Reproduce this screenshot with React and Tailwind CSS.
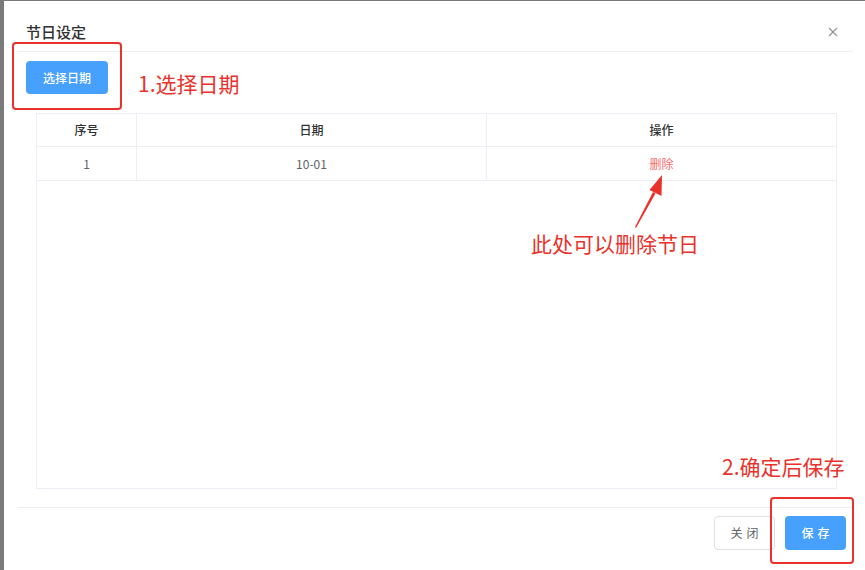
import React from "react";

const rows = [{ id: 1, date: "10-01" }];

const Arrow = () => (
  <svg className="absolute left-[626px] top-[170px]" width="44" height="62" viewBox="0 0 44 62">
    {/* tapered shaft + head pointing up-right */}
    <polygon points="9,57 27,22 29.5,23.5 10,58" fill="#e8322b" />
    <polygon points="36,5 35.5,26 23.5,20" fill="#e8322b" />
  </svg>
);

const App = () => {
  return (
    <div
      className="relative w-[865px] h-[570px] bg-[#7a7a7a] pl-[4px] pt-[1px] overflow-hidden"
      style={{ fontFamily: '"Noto Sans CJK SC", "Liberation Sans", sans-serif' }}
    >
      <div className="h-full bg-white flex flex-col">
        <div className="ml-[14px] mr-[12px] flex flex-col h-full">
          {/* header */}
          <div className="h-[51px] pt-[12px] flex items-center justify-between border-b border-[#ebeef5] shrink-0">
            <div className="pl-[8px] text-[15px] font-medium text-[#303133]">节日设定</div>
            <div className="pr-[15px]">
              <svg width="10" height="10" viewBox="0 0 10 10">
                <path d="M1 1L9 9M9 1L1 9" stroke="#909399" strokeWidth="1.2" />
              </svg>
            </div>
          </div>

          {/* toolbar */}
          <div className="pt-[9px] pl-[8px] h-[42px] flex items-start gap-[30px]">
            <button className="w-[82px] h-[33px] rounded-[4px] bg-[#46a0fc] text-white text-[12px] font-medium">
              选择日期
            </button>
            <span className="mt-[7px] text-[21px] leading-[30px] text-[#e8322b]">1.选择日期</span>
          </div>

          {/* table */}
          <div className="ml-[18px] mt-[19px] w-[801px] h-[376px] border border-[#ebeef5] text-[12px]">
            <div className="grid grid-cols-[100px_350px_1fr] h-[33px] border-b border-[#ebeef5] text-[#303133] font-medium">
              <div className="flex items-center justify-center border-r border-[#ebeef5]">序号</div>
              <div className="flex items-center justify-center border-r border-[#ebeef5]">日期</div>
              <div className="flex items-center justify-center">操作</div>
            </div>
            {rows.map((r) => (
              <div key={r.id} className="grid grid-cols-[100px_350px_1fr] h-[34px] border-b border-[#ebeef5] text-[#606266]">
                <div className="flex items-center justify-center border-r border-[#ebeef5]">{r.id}</div>
                <div className="flex items-center justify-center border-r border-[#ebeef5]">{r.date}</div>
                <div className="flex items-center justify-center text-[#f56c6c]">删除</div>
              </div>
            ))}
          </div>

          {/* footer */}
          <div className="mt-[18px] border-t border-[#ebeef5] flex-1 flex items-start justify-end gap-[10px] pt-[8px] pr-[7px]">
            <button className="w-[61px] h-[34px] rounded-[4px] border border-[#dcdfe6] bg-white text-[12px] text-[#606266] tracking-[4px] pl-[4px]">
              关闭
            </button>
            <button className="w-[61px] h-[34px] rounded-[4px] bg-[#46a0fc] text-white text-[12px] font-medium tracking-[4px] pl-[4px]">
              保存
            </button>
          </div>
        </div>
      </div>

      {/* annotations */}
      <div className="absolute left-[12px] top-[42px] w-[110px] h-[68px] border-2 border-[#e8322b] rounded-[4px]" />
      <div className="absolute left-[770px] top-[497px] w-[84px] h-[67px] border-2 border-[#e8322b] rounded-[4px]" />
      <Arrow />
      <div className="absolute left-[531px] top-[228px] text-[21px] leading-[30px] text-[#e8322b]">此处可以删除节日</div>
      <div className="absolute left-[722px] top-[451px] text-[21px] leading-[30px] text-[#e8322b]">2.确定后保存</div>
    </div>
  );
};

export default App;
